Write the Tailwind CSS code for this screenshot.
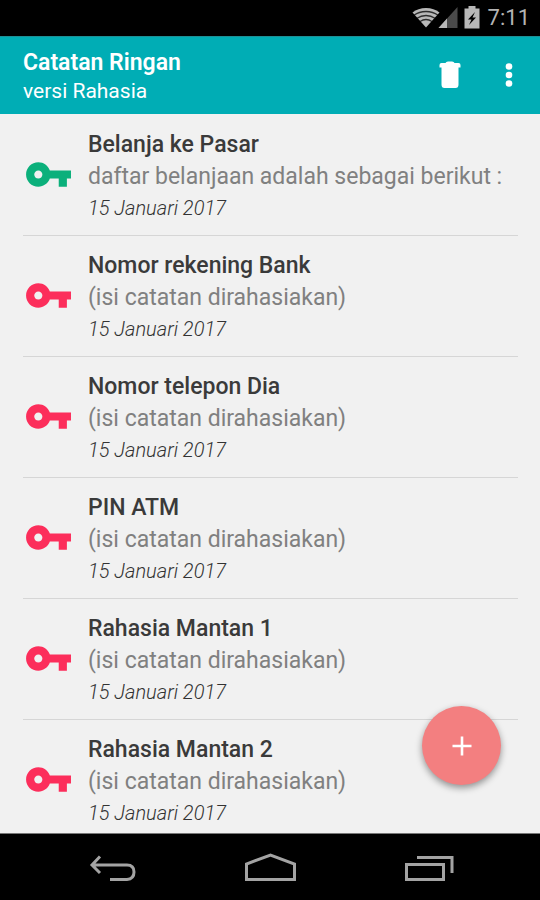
<!DOCTYPE html>
<html lang="id">
<head>
<meta charset="utf-8">
<meta name="viewport" content="width=device-width, initial-scale=1">
<title>Catatan Ringan</title>
<script src="https://cdn.jsdelivr.net/npm/@tailwindcss/browser@4"></script>
</head>
<body class="relative flex h-dvh flex-col overflow-hidden bg-[#f1f1f1] font-['Roboto',sans-serif]">
<svg class="hidden" aria-hidden="true">
  <symbol id="key" viewBox="-0.5 0 24 24"><path fill="currentColor" d="M12.65 10C11.83 7.67 9.61 6 7 6c-3.31 0-6 2.69-6 6s2.69 6 6 6c2.61 0 4.83-1.67 5.65-4H17v4h4v-4h2v-4H12.65zM7 14c-1.1 0-2-.9-2-2s.9-2 2-2 2 .9 2 2-.9 2-2 2z"/></symbol>
</svg>

<div class="flex h-9 shrink-0 items-center justify-end bg-black pr-2.5 text-[#b4b4b4]">
  <svg class="h-9 w-[76px]" viewBox="0 0 76 36" aria-hidden="true">
    <path fill="#b8b8b8" d="M18 27.500L4.500 12.500Q10 8 18 8T31.500 12.500Z"/>
    <g fill="none" stroke="#000" stroke-opacity=".75" stroke-width="1.300">
      <path d="M6 15.200Q11 11.500 18 11.500T30 15.200"/><path d="M9 18.300Q13 15.500 18 15.500T27 18.300"/><path d="M12 21.500Q15 19.500 18 19.500T24 21.500"/>
    </g>
    <path fill="#4a4a4a" d="M30.500 28L49.500 7V28Z"/><path fill="#b8b8b8" d="M30.500 28L39 18.600V28Z"/>
    <path fill="#b8b8b8" d="M60.500 6h7v2.500h4V28.500h-15V8.500h4z"/>
    <path fill="#000" d="M67 12l-7 7.500h3.500L61 25l7-7.500h-3.500z"/>
  </svg>
  <time class="pl-1 text-[22px] leading-9">7:11</time>
</div>

<header class="flex h-[78px] shrink-0 items-center border-t border-[#1f8f95] bg-[#00adb5] pr-1.5 pl-[23px] text-white">
  <div class="flex-1 pt-0.5">
    <h1 class="text-[23px] leading-[29px] font-semibold">Catatan Ringan</h1>
    <p class="text-[21px] leading-[29px]">versi Rahasia</p>
  </div>
  <button class="flex size-12 items-center justify-center" aria-label="Hapus">
    <svg class="size-9" viewBox="0 0 36 36"><path fill="#fff" d="M7.500 7q0-2 2-2h4q.5-1.500 2.500-1.500h4q2 0 2.500 1.500h4q2 0 2 2v2.500H7.500zM9.500 9.500h17v17q0 3.500-3 3.500h-11q-3 0-3-3.500z"/></svg>
  </button>
  <button class="ml-3 flex size-12 items-center justify-center" aria-label="Menu lainnya">
    <svg class="size-9" viewBox="0 0 36 36" fill="#fff"><circle cx="17" cy="8.500" r="3.300"/><circle cx="17" cy="17" r="3.300"/><circle cx="17" cy="25.500" r="3.300"/></svg>
  </button>
</header>

<main class="min-h-0 flex-1 overflow-y-auto pt-px pr-[22px] pl-[23px] [scrollbar-width:none]">
  <ul>
    <li class="flex items-center border-b border-[#d6d6d6] pt-3.5 pb-3">
      <svg class="mr-4 mb-1 size-[49px] shrink-0 text-[#0bb07b]" role="img" aria-label="Terbuka"><use href="#key"/></svg>
      <div class="min-w-0 whitespace-nowrap"><h2 class="text-[23px] leading-8 font-medium text-[#3a3a3a]">Belanja ke Pasar</h2><p class="text-[23px] leading-8 text-[#808080]">daftar belanjaan adalah sebagai berikut :</p><p class="text-xl leading-[30px] font-light text-[#333] italic">15 Januari 2017</p></div>
    </li>
    <li class="flex items-center border-b border-[#d6d6d6] pt-3.5 pb-3">
      <svg class="mr-4 mb-1 size-[49px] shrink-0 text-[#fc2e5b]" role="img" aria-label="Terkunci"><use href="#key"/></svg>
      <div class="min-w-0 whitespace-nowrap"><h2 class="text-[23px] leading-8 font-medium text-[#3a3a3a]">Nomor rekening Bank</h2><p class="text-[23px] leading-8 text-[#808080]">(isi catatan dirahasiakan)</p><p class="text-xl leading-[30px] font-light text-[#333] italic">15 Januari 2017</p></div>
    </li>
    <li class="flex items-center border-b border-[#d6d6d6] pt-3.5 pb-3">
      <svg class="mr-4 mb-1 size-[49px] shrink-0 text-[#fc2e5b]" role="img" aria-label="Terkunci"><use href="#key"/></svg>
      <div class="min-w-0 whitespace-nowrap"><h2 class="text-[23px] leading-8 font-medium text-[#3a3a3a]">Nomor telepon Dia</h2><p class="text-[23px] leading-8 text-[#808080]">(isi catatan dirahasiakan)</p><p class="text-xl leading-[30px] font-light text-[#333] italic">15 Januari 2017</p></div>
    </li>
    <li class="flex items-center border-b border-[#d6d6d6] pt-3.5 pb-3">
      <svg class="mr-4 mb-1 size-[49px] shrink-0 text-[#fc2e5b]" role="img" aria-label="Terkunci"><use href="#key"/></svg>
      <div class="min-w-0 whitespace-nowrap"><h2 class="text-[23px] leading-8 font-medium text-[#3a3a3a]">PIN ATM</h2><p class="text-[23px] leading-8 text-[#808080]">(isi catatan dirahasiakan)</p><p class="text-xl leading-[30px] font-light text-[#333] italic">15 Januari 2017</p></div>
    </li>
    <li class="flex items-center border-b border-[#d6d6d6] pt-3.5 pb-3">
      <svg class="mr-4 mb-1 size-[49px] shrink-0 text-[#fc2e5b]" role="img" aria-label="Terkunci"><use href="#key"/></svg>
      <div class="min-w-0 whitespace-nowrap"><h2 class="text-[23px] leading-8 font-medium text-[#3a3a3a]">Rahasia Mantan 1</h2><p class="text-[23px] leading-8 text-[#808080]">(isi catatan dirahasiakan)</p><p class="text-xl leading-[30px] font-light text-[#333] italic">15 Januari 2017</p></div>
    </li>
    <li class="flex items-center border-b border-[#d6d6d6] pt-3.5 pb-3">
      <svg class="mr-4 mb-1 size-[49px] shrink-0 text-[#fc2e5b]" role="img" aria-label="Terkunci"><use href="#key"/></svg>
      <div class="min-w-0 whitespace-nowrap"><h2 class="text-[23px] leading-8 font-medium text-[#3a3a3a]">Rahasia Mantan 2</h2><p class="text-[23px] leading-8 text-[#808080]">(isi catatan dirahasiakan)</p><p class="text-xl leading-[30px] font-light text-[#333] italic">15 Januari 2017</p></div>
    </li>
  </ul>
</main>

<button class="absolute right-[39px] bottom-[115px] flex size-[79px] items-center justify-center rounded-full bg-[#f37f80] shadow-[0_3px_7px_rgba(0,0,0,0.4)]" aria-label="Tambah catatan">
  <svg class="size-6" viewBox="0 0 24 24" fill="none" stroke="#fff" stroke-width="2.600"><path d="M12 2.500v19M2.500 12h19"/></svg>
</button>

<nav class="flex h-[67px] shrink-0 items-center justify-center gap-[108px] border-t border-[#777] bg-black pl-0.5 text-[#a3a3a3]">
  <button aria-label="Kembali"><svg class="h-8 w-12" viewBox="0 0 48 32" fill="none" stroke="currentColor" stroke-width="3"><path d="M4 14H39Q46 14 46 21T39 28.500H22M12 5.500L4 14L12 22"/></svg></button>
  <button aria-label="Beranda"><svg class="h-8 w-[52px]" viewBox="0 0 52 32" fill="none" stroke="currentColor" stroke-width="3"><path d="M2.500 28.500V13L26.500 4L50.500 13V28.500Z"/></svg></button>
  <button aria-label="Aplikasi terbaru"><svg class="h-8 w-[50px]" viewBox="0 0 50 32" fill="none" stroke="currentColor" stroke-width="3"><path d="M2.500 13.500H39.500V28.500H2.500ZM13 6.500H48V22"/></svg></button>
</nav>
</body>
</html>
